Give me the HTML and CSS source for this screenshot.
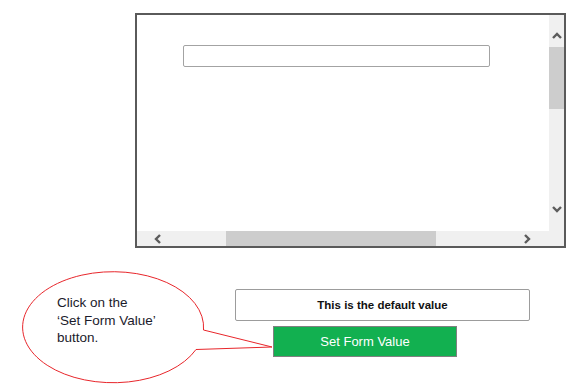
FILE: index.html
```html
<!DOCTYPE html>
<html lang="en">
<head>
    <meta charset="UTF-8">
    <title>Set Form Value</title>
    <meta name="viewport" content="width=device-width, initial-scale=1.0">
    <link rel="stylesheet" href="styles.css">
</head>
<body>
    <!-- Embedded frame with its own scrollbars -->
    <div class="frame">
        <div class="frame-body">
            <div class="frame-content">
                <input type="text" class="frame-input">
            </div>
            <div class="vbar">
                <div class="vbar-up">
                    <svg width="10" height="7" viewBox="0 0 10 7"><path d="M1 6 L5 2 L9 6" fill="none" stroke="#5c5c5c" stroke-width="2.4"/></svg>
                </div>
                <div class="vbar-thumb"></div>
                <div class="vbar-down">
                    <svg width="10" height="7" viewBox="0 0 10 7"><path d="M1 1 L5 5 L9 1" fill="none" stroke="#5c5c5c" stroke-width="2.4"/></svg>
                </div>
            </div>
        </div>
        <div class="hbar">
            <div class="hbar-left">
                <svg width="7" height="10" viewBox="0 0 7 10"><path d="M6 1 L2 5 L6 9" fill="none" stroke="#5c5c5c" stroke-width="2.4"/></svg>
            </div>
            <div class="hbar-thumb"></div>
            <div class="hbar-right">
                <svg width="7" height="10" viewBox="0 0 7 10"><path d="M1 1 L5 5 L1 9" fill="none" stroke="#5c5c5c" stroke-width="2.4"/></svg>
            </div>
        </div>
    </div>

    <div class="form-area">
        <div class="value-box">This is the default value</div>
        <button class="set-btn">Set Form Value</button>

        <!-- Callout annotation -->
        <div class="callout">
            <svg width="280" height="120" viewBox="0 265 280 120">
                <path d="M203.5 330 L272 347 L196 349.5 A90.5 55.5 0 1 1 203.5 330 Z" fill="#fff" stroke="#e8262b" stroke-width="1"/>
            </svg>
            <p class="callout-text">Click on the<br>‘Set Form Value’<br>button.</p>
        </div>
    </div>
</body>
</html>
```

FILE: styles.css
```css
body {
    margin: 0;
    background: #fff;
    font-family: 'Liberation Sans', Arial, sans-serif;
    width: 569px;
    height: 385px;
    overflow: hidden;
}
.frame {
    margin: 13px 0 0 135px;
    width: 427px;
    height: 231px;
    border: 2px solid #5a5a5a;
    display: flex;
    flex-direction: column;
}
.frame-body {
    flex: 1;
    display: flex;
}
.frame-content {
    flex: 1;
    padding: 30px 0 0 46px;
}
.frame-input {
    display: block;
    box-sizing: border-box;
    width: 307px;
    height: 22px;
    margin: 0;
    border: 1px solid #a3a3a3;
    border-radius: 2px;
    background: #fff;
}
.vbar {
    width: 15px;
    background: #f0f0f0;
    display: flex;
    flex-direction: column;
}
.vbar-up {
    height: 32px;
    box-sizing: border-box;
    padding-top: 17px;
    display: flex;
    justify-content: center;
    align-items: flex-start;
}
.vbar-thumb {
    height: 62px;
    background: #cdcdcd;
}
.vbar-down {
    margin-top: auto;
    height: 40px;
    box-sizing: border-box;
    padding-top: 15px;
    display: flex;
    justify-content: center;
    align-items: flex-start;
}
.vbar svg, .hbar svg {
    display: block;
}
.hbar {
    height: 15px;
    background: #f0f0f0;
    display: flex;
    align-items: center;
}
.hbar-left {
    width: 89px;
    box-sizing: border-box;
    padding-left: 17px;
    height: 15px;
    display: flex;
    align-items: center;
}
.hbar-thumb {
    width: 210px;
    height: 15px;
    background: #cdcdcd;
}
.hbar-right {
    flex: 1;
    box-sizing: border-box;
    padding-left: 88px;
    height: 15px;
    display: flex;
    align-items: center;
}
.form-area {
    position: relative;
    margin-top: 41px;
    padding-left: 235px;
}
.value-box {
    box-sizing: border-box;
    width: 295px;
    height: 32px;
    border: 1px solid #9c9c9c;
    border-radius: 2px;
    display: flex;
    align-items: center;
    justify-content: center;
    font-size: 11.5px;
    font-weight: bold;
    color: #111;
}
.set-btn {
    display: block;
    box-sizing: border-box;
    margin: 5px 0 0 38px;
    width: 184px;
    height: 31px;
    background: #12b050;
    border: 1px solid #808080;
    color: #fff;
    font-family: 'Liberation Sans', Arial, sans-serif;
    font-size: 13px;
    padding: 0;
}
.callout {
    position: absolute;
    left: 0;
    top: -24px;
    width: 280px;
    height: 120px;
}
.callout svg {
    display: block;
}
.callout-text {
    position: absolute;
    left: 57px;
    top: 29px;
    margin: 0;
    font-size: 13.5px;
    line-height: 17.5px;
    color: #1b1b2b;
}
```
